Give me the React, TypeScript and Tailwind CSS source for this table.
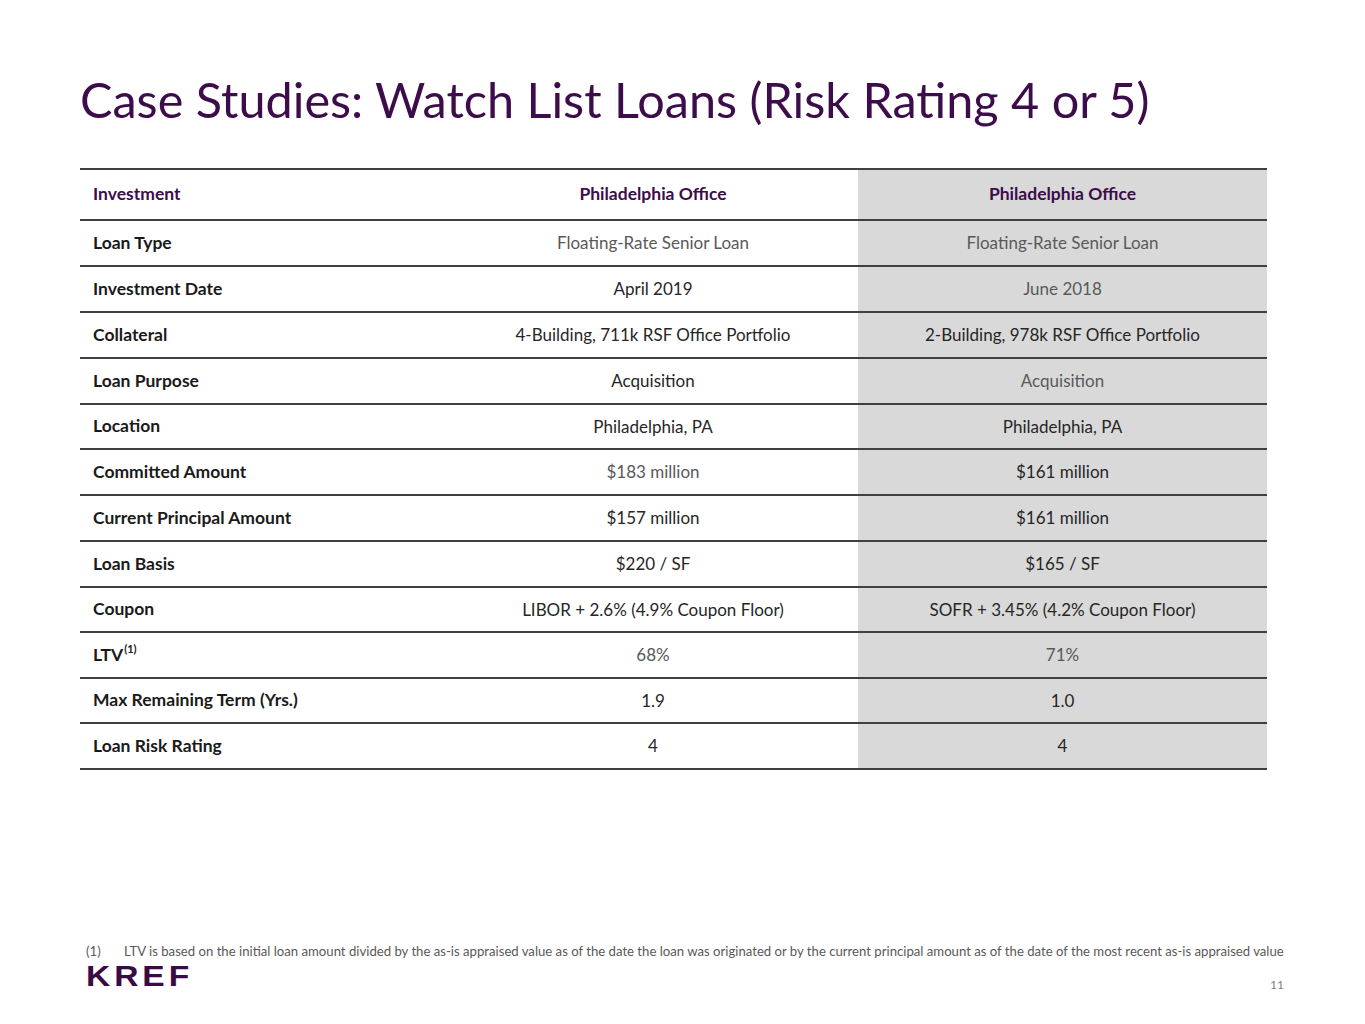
const rows: { label: string; sup?: string; a: string; aGray?: boolean; b: string; bGray?: boolean; h: string }[] = [
  { label: "Loan Type", a: "Floating-Rate Senior Loan", aGray: true, b: "Floating-Rate Senior Loan", bGray: true, h: "h-[46px]" },
  { label: "Investment Date", a: "April 2019", b: "June 2018", bGray: true, h: "h-[46px]" },
  { label: "Collateral", a: "4-Building, 711k RSF Office Portfolio", b: "2-Building, 978k RSF Office Portfolio", h: "h-[46px]" },
  { label: "Loan Purpose", a: "Acquisition", b: "Acquisition", bGray: true, h: "h-[46px]" },
  { label: "Location", a: "Philadelphia, PA", b: "Philadelphia, PA", h: "h-[45px]" },
  { label: "Committed Amount", a: "$183 million", aGray: true, b: "$161 million", h: "h-[46px]" },
  { label: "Current Principal Amount", a: "$157 million", b: "$161 million", h: "h-[46px]" },
  { label: "Loan Basis", a: "$220 / SF", b: "$165 / SF", h: "h-[46px]" },
  { label: "Coupon", a: "LIBOR + 2.6% (4.9% Coupon Floor)", b: "SOFR + 3.45% (4.2% Coupon Floor)", h: "h-[45px]" },
  { label: "LTV", sup: "(1)", a: "68%", aGray: true, b: "71%", bGray: true, h: "h-[46px]" },
  { label: "Max Remaining Term (Yrs.)", a: "1.9", b: "1.0", h: "h-[45px]" },
  { label: "Loan Risk Rating", a: "4", b: "4", h: "h-[46px]" },
];

export default function App() {
  return (
    <div className="w-[1365px] h-[1024px] bg-white flex flex-col font-['Lato',sans-serif]">
      <h1 className="pl-[80px] pt-[74px] text-[48.6px] leading-[50px] text-[#3d0c4a]">
        Case Studies: Watch List Loans (Risk Rating 4 or 5)
      </h1>

      <div className="ml-[80px] mt-[44px] w-[1187px] border-t-2 border-[#404040]">
        <div className="grid grid-cols-[368px_410px_409px] h-[51px] border-b-2 border-[#404040] text-[17.5px] font-bold text-[#3d0c4a]">
          <div className="flex items-center pl-[13px]">Investment</div>
          <div className="flex items-center justify-center">Philadelphia Office</div>
          <div className="flex items-center justify-center bg-[#d9d9d9]">Philadelphia Office</div>
        </div>
        {rows.map((r) => (
          <div
            key={r.label}
            className={`grid grid-cols-[368px_410px_409px] ${r.h} border-b-2 border-[#404040] text-[17px]`}
          >
            <div className="flex items-center pl-[13px] text-[17.5px] font-bold text-[#1a1a1a]">
              {r.label}
              {r.sup && <sup className="text-[11px] -top-[6px] ml-[1px]">{r.sup}</sup>}
            </div>
            <div className={`flex items-center justify-center ${r.aGray ? "text-[#595959]" : "text-[#262626]"}`}>
              {r.a}
            </div>
            <div
              className={`flex items-center justify-center bg-[#d9d9d9] ${r.bGray ? "text-[#595959]" : "text-[#262626]"}`}
            >
              {r.b}
            </div>
          </div>
        ))}
      </div>

      <div className="mt-[173px] pl-[86px] flex text-[13.15px] leading-[16px] text-[#595959]">
        <span className="w-[38px] shrink-0">(1)</span>
        <span className="whitespace-nowrap">
          LTV is based on the initial loan amount divided by the as-is appraised value as of the date the loan was
          originated or by the current principal amount as of the date of the most recent as-is appraised value
        </span>
      </div>
      <div className="pl-[86px] pr-[81px] flex items-start justify-between">
        <span className="mt-[2px] inline-block origin-left scale-x-[1.12] font-['Liberation_Sans',sans-serif] font-bold text-[30px] leading-[30px] tracking-[3.5px] text-[#3a0a45]">
          KREF
        </span>
        <span className="mt-[17px] text-[12px] text-[#7f7f7f]">11</span>
      </div>
    </div>
  );
}
